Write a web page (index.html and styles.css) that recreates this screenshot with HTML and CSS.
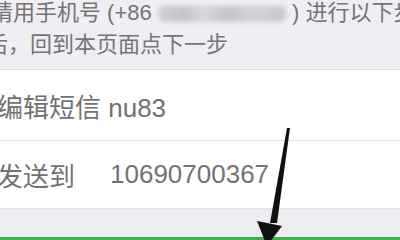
FILE: index.html
```html
<!DOCTYPE html>
<html lang="zh">
<head>
<meta charset="utf-8">
<link rel="stylesheet" href="styles.css">
</head>
<body>
<div class="screen">
  <section class="intro">
    <p class="line line-1">请用手机号 (+86 <span class="masked"></span> ) 进行以下步骤</p>
    <p class="line line-2">后，回到本页面点下一步</p>
  </section>
  <section class="list">
    <div class="row">编辑短信 nu83</div>
    <div class="row"><span class="label">发送到</span><span class="value">10690700367</span></div>
  </section>
  <div class="band"></div>
  <div class="green"></div>
  <svg class="arrow" width="400" height="240" viewBox="0 0 400 240">
    <polygon points="287,128 290,128 277,223 270,223" fill="#111"/>
    <polygon points="257,221 282,226 267,246" fill="#111"/>
  </svg>
</div>
</body>
</html>
```

FILE: styles.css
```css
html, body {
  margin: 0;
  padding: 0;
  background: #ffffff;
}
.screen {
  position: relative;
  width: 400px;
  height: 240px;
  overflow: hidden;
  font-family: "Liberation Sans", "Noto Sans CJK SC", sans-serif;
  display: flex;
  flex-direction: column;
}
.intro {
  background: #eeeef3;
  height: 70px;
  box-sizing: border-box;
  border-bottom: 1px solid #dedee2;
  color: #747479;
  font-size: 22px;
}
.line {
  margin: 0;
  white-space: nowrap;
  line-height: 32px;
}
.line-1 {
  margin-top: -3px;
  margin-left: -9px;
}
.line-2 {
  margin-left: -14px;
}
.masked {
  display: inline-block;
  width: 128px;
  height: 16px;
  vertical-align: -2px;
  background: linear-gradient(90deg, #d2d2d6 0%, #c4c4c8 20%, #d8d8dc 35%, #c6c6ca 55%, #d4d4d8 75%, #c8c8cc 100%);
  filter: blur(2px);
  border-radius: 6px;
}
.list {
  background: #ffffff;
  color: #727272;
  font-size: 26px;
}
.row {
  height: 70px;
  display: flex;
  align-items: center;
  margin-left: -3px;
  white-space: nowrap;
}
.row + .row {
  height: 67px;
  border-top: 1px solid #e2e2e2;
  margin-left: 0;
}
.row + .row .label {
  margin-left: -3px;
}
.value {
  margin-left: 35px;
}
.band {
  flex: 1;
  background: #ececf1;
  border-top: 1px solid #e4e4e8;
}
.green {
  height: 3px;
  background: #3db44b;
}
.arrow {
  position: absolute;
  left: 0;
  top: 0;
}
```
